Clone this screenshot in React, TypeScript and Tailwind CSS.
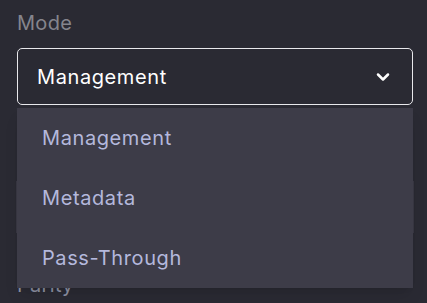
import { ChevronDown } from "lucide-react";

const options = ["Management", "Metadata", "Pass-Through"];

export default function App() {
  return (
    <div
      className="relative h-[303px] w-[427px] overflow-hidden bg-[#2a2a33] px-[17px] pt-[10px]"
      style={{ fontFamily: "Inter, 'Open Sans', sans-serif" }}
    >
      <label className="block text-[20px] leading-[26px] tracking-[0.3px] text-[#85858d]">Mode</label>

      {/* select */}
      <div className="mt-[12px] flex h-[57px] w-[396px] items-center justify-between rounded-[5px] border border-[#e8e8ec] pl-[19px] pr-[19px]">
        <span className="text-[20px] tracking-[0.6px] text-white">Management</span>
        <ChevronDown className="size-[20px] text-white" strokeWidth={3} />
      </div>

      {/* field hidden behind menu */}
      <div className="mt-[22px] h-[24px]" />
      <div className="-ml-px mt-[30px] h-[52px] w-[398px] bg-[#393844]" />

      <div className="mt-[40px] text-[20px] leading-[24px] tracking-[0.3px] text-[#8d91a3]">Parity</div>

      {/* open menu */}
      <ul className="absolute left-[17px] top-[108px] w-[396px] bg-[#3d3c48] shadow-lg">
        {options.map((o) => (
          <li
            key={o}
            className="flex h-[60px] items-center pl-[25px] text-[20px] tracking-[0.6px] text-[#b4b8dc]"
          >
            {o}
          </li>
        ))}
      </ul>
    </div>
  );
}
